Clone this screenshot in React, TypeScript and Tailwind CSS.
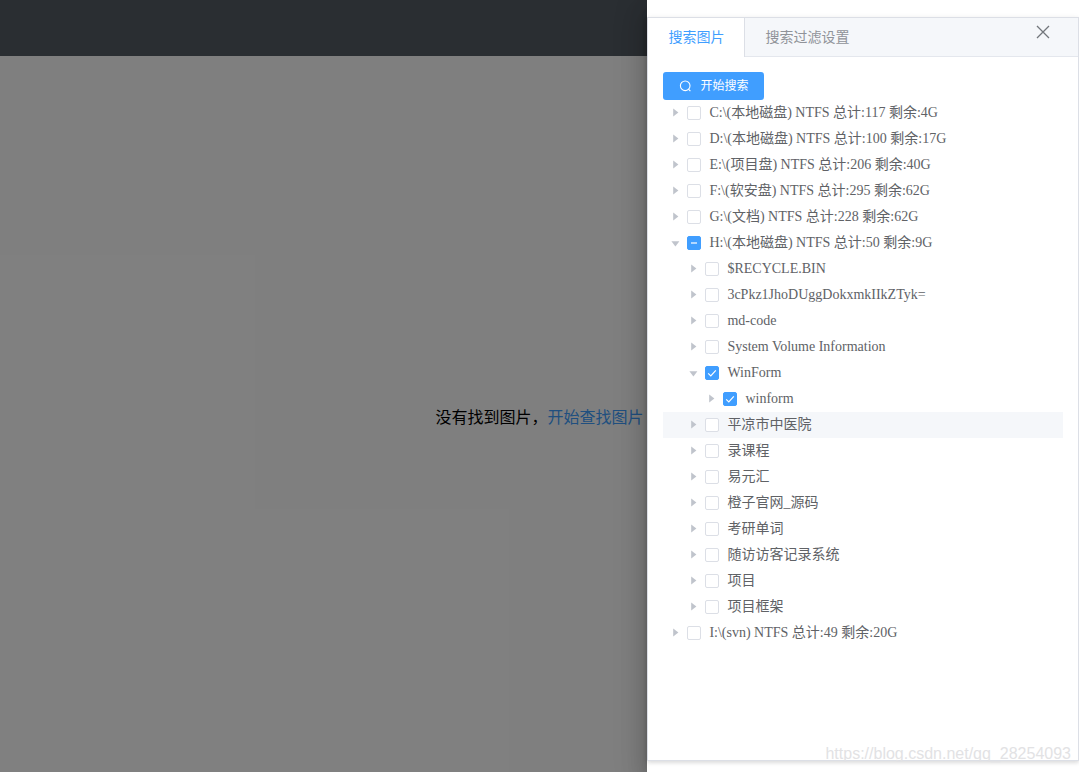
import { useState } from "react";
import clsx from "clsx";

interface TreeNode {
  id: string;
  label: string;
  checked?: boolean;
  indeterminate?: boolean;
  children?: TreeNode[];
}

const disks: TreeNode[] = [
  { id: "c", label: "C:\\(本地磁盘) NTFS 总计:117 剩余:4G" },
  { id: "d", label: "D:\\(本地磁盘) NTFS 总计:100 剩余:17G" },
  { id: "e", label: "E:\\(项目盘) NTFS 总计:206 剩余:40G" },
  { id: "f", label: "F:\\(软安盘) NTFS 总计:295 剩余:62G" },
  { id: "g", label: "G:\\(文档) NTFS 总计:228 剩余:62G" },
  {
    id: "h",
    label: "H:\\(本地磁盘) NTFS 总计:50 剩余:9G",
    indeterminate: true,
    children: [
      { id: "h-recycle", label: "$RECYCLE.BIN" },
      { id: "h-3c", label: "3cPkz1JhoDUggDokxmkIIkZTyk=" },
      { id: "h-md", label: "md-code" },
      { id: "h-svi", label: "System Volume Information" },
      {
        id: "h-winform",
        label: "WinForm",
        checked: true,
        children: [{ id: "h-winform-winform", label: "winform", checked: true }],
      },
      { id: "h-hospital", label: "平凉市中医院" },
      { id: "h-course", label: "录课程" },
      { id: "h-yyh", label: "易元汇" },
      { id: "h-orange", label: "橙子官网_源码" },
      { id: "h-words", label: "考研单词" },
      { id: "h-visitor", label: "随访访客记录系统" },
      { id: "h-project", label: "项目" },
      { id: "h-frame", label: "项目框架" },
    ],
  },
  { id: "i", label: "I:\\(svn) NTFS 总计:49 剩余:20G" },
];

const indents = ["pl-0", "pl-[18px]", "pl-[36px]"];

interface TreeItemProps {
  node: TreeNode;
  level: number;
  current: string;
  onSelect: (id: string) => void;
}

function TreeItem({ node, level, current, onSelect }: TreeItemProps) {
  const [open, setOpen] = useState(Boolean(node.children));
  const [checked, setChecked] = useState(Boolean(node.checked));
  const [partial, setPartial] = useState(Boolean(node.indeterminate));

  function handleChange() {
    setChecked(partial || !checked);
    setPartial(false);
  }

  return (
    <li>
      <div
        className={clsx("flex h-[26px] items-center hover:bg-[#f5f7fa]", indents[level], current === node.id && "bg-[#f5f7fa]")}
        onClick={() => onSelect(node.id)}
      >
        <button
          type="button"
          className="flex h-6 w-6 shrink-0 items-center justify-center"
          onClick={() => setOpen((v) => !v)}
          aria-label={open ? "收起" : "展开"}
          aria-expanded={open}
        >
          <svg width="12" height="12" viewBox="0 0 12 12" className={clsx("fill-[#c0c4cc]", open && "rotate-90")} aria-hidden="true">
            <path d="M4.2 1.6v8L9.4 5.6z" />
          </svg>
        </button>
        <label className="flex cursor-pointer items-center gap-2">
          <span className="grid h-[14px] w-[14px] shrink-0 place-items-center">
            <input
              type="checkbox"
              checked={checked}
              ref={(el) => {
                if (el) el.indeterminate = partial;
              }}
              onChange={handleChange}
              className="col-start-1 row-start-1 h-[14px] w-[14px] appearance-none rounded-[2px] border border-[#dcdfe6] bg-white checked:border-[#409eff] checked:bg-[#409eff] indeterminate:border-[#409eff] indeterminate:bg-[#409eff]"
            />
            {(checked || partial) && (
              <svg width="14" height="14" viewBox="0 0 14 14" className="pointer-events-none col-start-1 row-start-1" aria-hidden="true">
                {partial ? (
                  <path d="M4 6h6v2H4z" fill="#b3d8ff" />
                ) : (
                  <path d="M3.2 7.3l2.6 2.6 5-5.6" fill="none" stroke="#fff" strokeWidth="1.2" />
                )}
              </svg>
            )}
          </span>
          <span className="whitespace-nowrap text-sm text-[#606266]">{node.label}</span>
        </label>
      </div>
      {open && node.children && (
        <ul>
          {node.children.map((child) => (
            <TreeItem key={child.id} node={child} level={level + 1} current={current} onSelect={onSelect} />
          ))}
        </ul>
      )}
    </li>
  );
}

function SearchDrawer({ onClose }: { onClose: () => void }) {
  const [tab, setTab] = useState("search");
  const [current, setCurrent] = useState("h-hospital");

  return (
    <aside className="flex w-2/5 flex-col bg-white pt-[17px] pb-[11px] shadow-[0_8px_10px_-5px_rgba(0,0,0,0.2),0_16px_24px_2px_rgba(0,0,0,0.14),0_6px_30px_5px_rgba(0,0,0,0.12)]">
      <div className="flex flex-1 flex-col border border-[#dcdfe6] shadow-[0_2px_4px_0_rgba(0,0,0,0.12),0_0_6px_0_rgba(0,0,0,0.04)]">
        <div className="flex h-[39px] items-stretch border-b border-[#e4e7ed] bg-[#f5f7fa] text-sm" role="tablist">
          <button
            type="button"
            role="tab"
            aria-selected={tab === "search"}
            onClick={() => setTab("search")}
            className={clsx("px-5", tab === "search" ? "-mb-px border-r border-[#dcdfe6] bg-white pb-px text-[#409eff]" : "text-[#909399]")}
          >
            搜索图片
          </button>
          <button
            type="button"
            role="tab"
            aria-selected={tab === "filter"}
            onClick={() => setTab("filter")}
            className={clsx("px-5", tab === "filter" ? "-mb-px border-x border-[#dcdfe6] bg-white pb-px text-[#409eff]" : "text-[#909399]")}
          >
            搜索过滤设置
          </button>
          <button type="button" onClick={onClose} className="mr-[25px] mb-[11px] ml-auto text-[#72767b]" aria-label="关闭">
            <svg width="20" height="20" viewBox="0 0 20 20" fill="none" stroke="currentColor" strokeWidth="1.3" aria-hidden="true">
              <path d="M4 4l12 12M16 4L4 16" />
            </svg>
          </button>
        </div>
        {tab === "search" && (
          <div className="p-[15px]" role="tabpanel">
            <button type="button" className="flex h-7 items-center gap-2 rounded-[3px] bg-[#409eff] px-4 text-xs text-white">
              <svg width="13" height="13" viewBox="0 0 13 13" fill="none" stroke="currentColor" strokeWidth="1.1" aria-hidden="true">
                <circle cx="6.2" cy="5.8" r="4.8" />
                <path d="M9.4 9.2l2 2" />
              </svg>
              开始搜索
            </button>
            <ul className="font-['Liberation_Serif','Noto_Sans_CJK_SC',serif]">
              {disks.map((disk) => (
                <TreeItem key={disk.id} node={disk} level={0} current={current} onSelect={setCurrent} />
              ))}
            </ul>
          </div>
        )}
      </div>
    </aside>
  );
}

export default function App() {
  const [open, setOpen] = useState(true);

  return (
    <div className="relative flex min-h-screen flex-col bg-white font-['Liberation_Sans','Noto_Sans_CJK_SC',sans-serif]">
      <header className="h-14 bg-[#545c64]" />
      <main className="flex flex-1 items-center justify-center pt-2">
        <p className="text-base text-black">
          没有找到图片，
          <a
            href="#search"
            className="text-[#409eff]"
            onClick={(event) => {
              event.preventDefault();
              setOpen(true);
            }}
          >
            开始查找图片
          </a>
        </p>
      </main>
      {open && (
        <div className="absolute inset-0 flex min-h-screen justify-end overflow-hidden bg-black/50">
          <SearchDrawer onClose={() => setOpen(false)} />
        </div>
      )}
      <span className="pointer-events-none absolute right-2 bottom-[6px] text-base text-[#e2e2e4]">https://blog.csdn.net/qq_28254093</span>
    </div>
  );
}
